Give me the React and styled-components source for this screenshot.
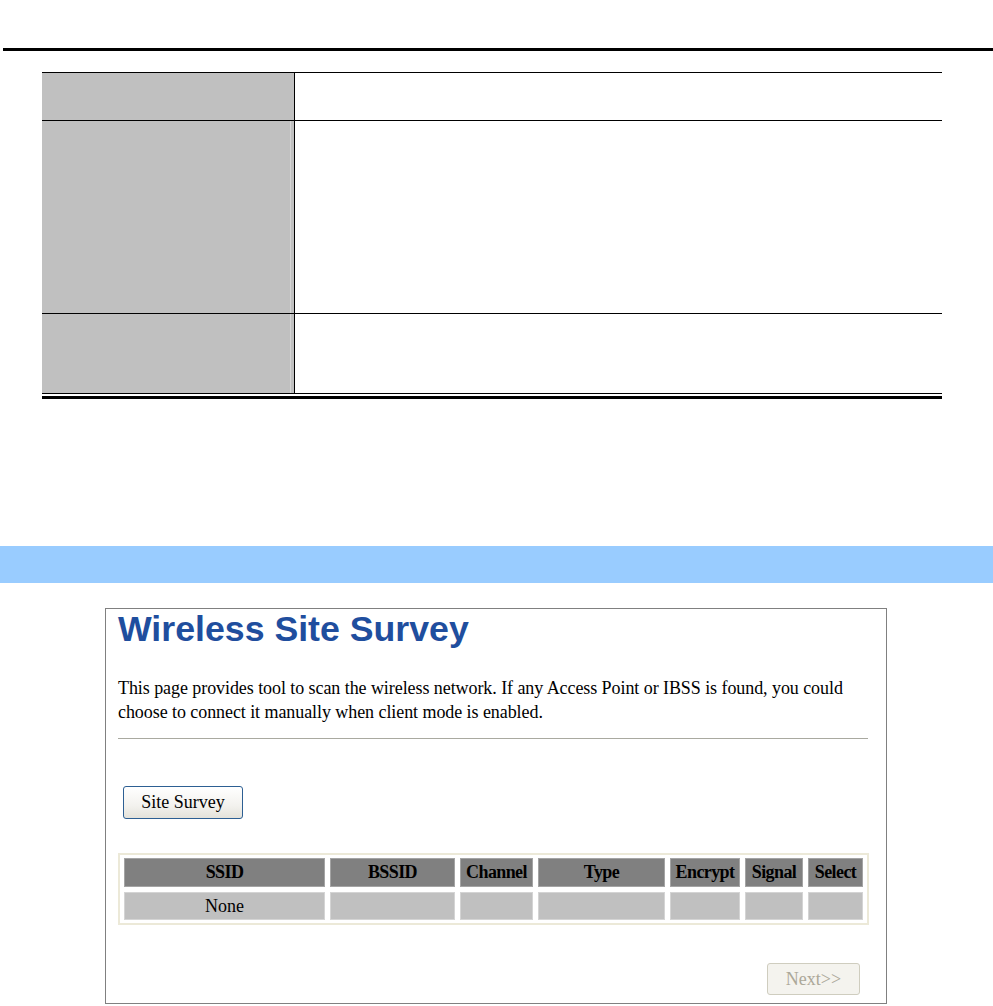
import React from 'react'
import styled, { createGlobalStyle } from 'styled-components'

const GlobalStyle = createGlobalStyle`
    body{
        margin: 0;
        background: #fff;
        font-family: "Liberation Serif", "Times New Roman", serif;
    }
`

const columns = [
    { name: 'SSID', width: 201, value: 'None' },
    { name: 'BSSID', width: 125 },
    { name: 'Channel', width: 73 },
    { name: 'Type', width: 127 },
    { name: 'Encrypt', width: 70 },
    { name: 'Signal', width: 58 },
    { name: 'Select', width: 55 },
]

const App = () => {
    return(
        <Page>
            <GlobalStyle />
            <TopRule />
            <DefTable>
                <DefRow height={48}>
                    <DefLabel />
                    <DefValue />
                </DefRow>
                <DefRow height={193}>
                    <DefLabel shine />
                    <DefValue />
                </DefRow>
                <DefRow height={80} last>
                    <DefLabel shine />
                    <DefValue />
                </DefRow>
            </DefTable>
            <ThickRule />
            <SectionBar />
            <Shot>
                <Title>Wireless Site Survey</Title>
                <Intro>
                    This page provides tool to scan the wireless network. If any Access Point or IBSS is found, you could<br />
                    choose to connect it manually when client mode is enabled.
                </Intro>
                <Divider />
                <SurveyButton>Site Survey</SurveyButton>
                <Grid cols={columns.map(c => c.width + 'px').join(' ')}>
                    {columns.map(c => <HeadCell key={c.name}>{c.name}</HeadCell>)}
                    {columns.map(c => <DataCell key={c.name}>{c.value || ''}</DataCell>)}
                </Grid>
                <Footer>
                    <NextButton disabled>Next&gt;&gt;</NextButton>
                </Footer>
            </Shot>
        </Page>
    )
}

const Page = styled.div`
    width: 993px;
    height: 1006px;
    overflow: hidden;
`
const TopRule = styled.div`
    margin: 48px 0 0 3px;
    height: 3px;
    background: #000;
`
const DefTable = styled.div`
    margin: 21px 0 0 42px;
    width: 900px;
    border-bottom: 1px solid #000;
`
const DefRow = styled.div`
    display: grid;
    grid-template-columns: 253px 1fr;
    height: ${p => p.height}px;
    box-sizing: border-box;
    border-top: 1px solid #000;
`
const DefLabel = styled.div`
    background: #c0c0c0;
    border-right: 1px solid #000;
    box-shadow: ${p => p.shine ? 'inset -3px 0 0 #c0c0c0, inset -4px 0 0 #d6d6d6' : 'none'};
`
const DefValue = styled.div`
    background: #fff;
`
const ThickRule = styled.div`
    margin: 2px 0 0 42px;
    width: 900px;
    height: 3px;
    background: #000;
`
const SectionBar = styled.div`
    margin-top: 147px;
    height: 37px;
    background: #99ccff;
`
const Shot = styled.div`
    margin: 25px 0 0 105px;
    width: 782px;
    height: 396px;
    box-sizing: border-box;
    border: 1px solid #808080;
    padding: 0 18px 0 12px;
    display: flex;
    flex-direction: column;
    align-items: flex-start;
`
const Title = styled.h1`
    margin: 0;
    font-family: "Liberation Sans", Arial, sans-serif;
    font-weight: bold;
    font-size: 35.7px;
    line-height: 40px;
    color: #1f4e9e;
`
const Intro = styled.p`
    margin: 27px 0 0;
    font-size: 18px;
    line-height: 24px;
    letter-spacing: -0.07px;
    color: #000;
    white-space: nowrap;
`
const Divider = styled.div`
    margin-top: 14px;
    width: 750px;
    height: 1px;
    background: #a9a9a0;
`
const SurveyButton = styled.button`
    margin: 47px 0 0 5px;
    width: 120px;
    height: 33px;
    border: 1px solid #2d5f93;
    border-radius: 3px;
    background: linear-gradient(#ffffff, #f3f2ee 60%, #e4e2da);
    font-family: "Liberation Serif", "Times New Roman", serif;
    font-size: 18px;
    color: #000;
    padding: 0;
`
const Grid = styled.div`
    margin-top: 34px;
    display: grid;
    grid-template-columns: ${p => p.cols};
    column-gap: 5px;
    row-gap: 5px;
    padding: 3px 4px;
    border: 2px solid #ece9d8;
`
const HeadCell = styled.div`
    height: 29px;
    box-sizing: border-box;
    background: #808080;
    border: 1px solid #a4a4a4;
    font-weight: bold;
    font-size: 18px;
    letter-spacing: -0.6px;
    line-height: 27px;
    text-align: center;
    white-space: nowrap;
    overflow: hidden;
`
const DataCell = styled.div`
    height: 28px;
    box-sizing: border-box;
    background: #c0c0c0;
    border: 1px solid #d4d4d4;
    font-size: 18px;
    line-height: 26px;
    text-align: center;
`
const Footer = styled.div`
    margin-top: 38px;
    align-self: stretch;
    display: flex;
    justify-content: flex-end;
    padding-right: 8px;
`
const NextButton = styled.button`
    width: 93px;
    height: 32px;
    border: 1px solid #cfcdbf;
    border-radius: 3px;
    background: #f4f3ee;
    color: #aca899;
    font-family: "Liberation Serif", "Times New Roman", serif;
    font-size: 18px;
    padding: 0;
`

export default App;
